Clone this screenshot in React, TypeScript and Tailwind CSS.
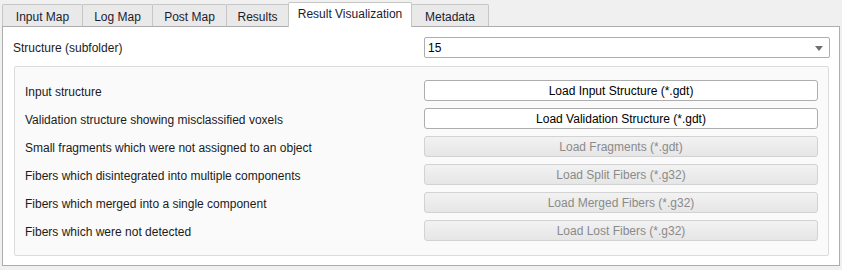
import React from 'react'

const tabs = [
  { name: 'Input Map', w: 'w-[81px]' },
  { name: 'Log Map', w: 'w-[71px]' },
  { name: 'Post Map', w: 'w-[75px]' },
  { name: 'Results', w: 'w-[63px]' },
  { name: 'Result Visualization', w: 'w-[124px]', active: true },
  { name: 'Metadata', w: 'w-[78px]' },
]

const rows = [
  { label: 'Input structure', button: 'Load Input Structure (*.gdt)', enabled: true },
  { label: 'Validation structure showing misclassified voxels', button: 'Load Validation Structure (*.gdt)', enabled: true },
  { label: 'Small fragments which were not assigned to an object', button: 'Load Fragments (*.gdt)' },
  { label: 'Fibers which disintegrated into multiple components', button: 'Load Split Fibers (*.g32)' },
  { label: 'Fibers which merged into a single component', button: 'Load Merged Fibers (*.g32)' },
  { label: 'Fibers which were not detected', button: 'Load Lost Fibers (*.g32)' },
]

export default function App() {
  return (
    <div
      className="w-[842px] h-[270px] bg-[#f0f0f0] pt-[2px] pl-[2px] text-[12px] text-[#1b1b1b] overflow-hidden"
      style={{ fontFamily: 'Tahoma, "Liberation Sans", Arial, sans-serif' }}
    >
      {/* Tabs */}
      <div className="flex items-end h-[24px] relative z-10">
        {tabs.map((tab, i) =>
          tab.active ? (
            <div
              key={tab.name}
              className={`${tab.w} h-[25px] -mb-px ${i > 0 ? '-ml-px' : ''} bg-white border border-b-0 border-[#c6c6c6] rounded-t-[2px] flex items-center justify-center pb-[2px] text-[#1c1c30]`}
            >
              {tab.name}
            </div>
          ) : (
            <div
              key={tab.name}
              className={`${tab.w} h-[22px] ${i > 0 ? '-ml-px' : ''} bg-[#e9e9e9] border border-b-0 border-[#c6c6c6] rounded-t-[2px] flex items-center justify-center pt-[2px] text-[#1c1c30]`}
            >
              {tab.name}
            </div>
          )
        )}
      </div>

      {/* Tab page */}
      <div className="w-[838px] h-[240px] bg-white border border-[#adadad] pt-[10px] pl-[11px] pr-[10px]">
        <div className="grid grid-cols-[410px_1fr] items-center h-[21px]">
          <span className="-ml-px pt-[1px]">Structure (subfolder)</span>
          <div className="h-[21px] -mr-px bg-white border border-[#adadad] rounded-[2px] flex items-center justify-between pl-[3px] pr-[6px] pt-[1px] text-black">
            <span>15</span>
            <svg width="8" height="5" viewBox="0 0 8 5">
              <path d="M0 0 H8 L4 5 Z" fill="#6f6f6f" />
            </svg>
          </div>
        </div>

        <div className="mt-[8px] h-[190px] bg-[#fafafa] border border-[#dcdcdc] rounded-[2px] pt-[13px] pl-[10px] pr-[10px] flex flex-col gap-[7px]">
          {rows.map((row) => (
            <div key={row.label} className="grid grid-cols-[399px_1fr] items-center h-[21px]">
              <span className="text-[#1b1b1b] pt-[2px]">{row.label}</span>
              {row.enabled ? (
                <div className="h-[21px] bg-white border border-[#adadad] rounded-[3px] flex items-center justify-center pt-[1px] text-black">
                  {row.button}
                </div>
              ) : (
                <div className="h-[21px] bg-gradient-to-b from-[#f2f2f2] to-[#e6e6e6] border border-[#d2d2d2] rounded-[3px] flex items-center justify-center pt-[1px] text-[#8a8a8a]">
                  {row.button}
                </div>
              )}
            </div>
          ))}
        </div>
      </div>
    </div>
  )
}
